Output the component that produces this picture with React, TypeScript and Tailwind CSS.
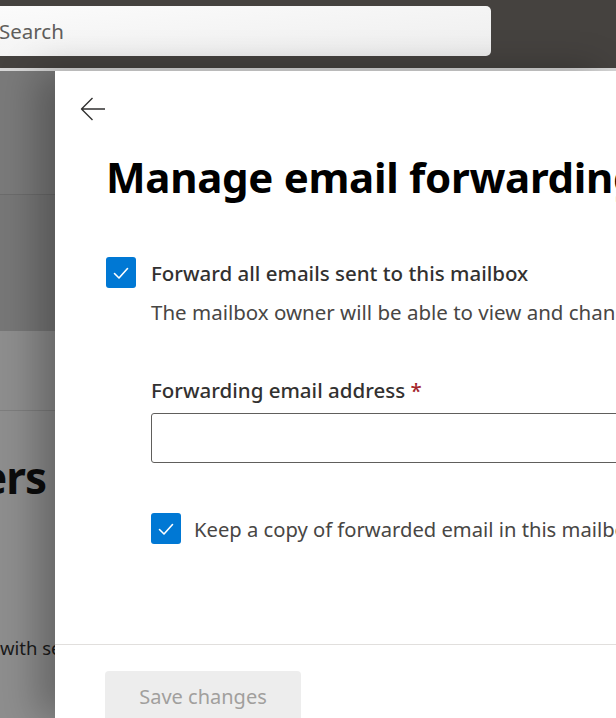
const font = { fontFamily: '"Noto Sans", "Open Sans", sans-serif' }

const CheckBox = () => (
    <div className="w-[30px] h-[31px] rounded-[3px] bg-[#0078d4] flex items-center justify-center shrink-0">
        <svg width="20" height="20" viewBox="0 0 20 20" fill="none">
            <path d="M3.5 10.5 L8 15 L16.5 5.5" stroke="#ffffff" strokeWidth="1.6" strokeLinecap="round" strokeLinejoin="round" />
        </svg>
    </div>
)

const App = () => {
    return (
        <div className="w-[616px] h-[718px] overflow-hidden flex flex-col bg-white" style={font}>
            {/* Top bar */}
            <header className="h-[68px] bg-[#45423f] flex items-start pt-[6px] shrink-0">
                <div className="w-[491px] h-[50px] rounded-r-[5px] bg-gradient-to-br from-[#fbfbfb] to-[#eeeeee] flex items-center">
                    <span className="text-[20.5px] text-[#605e5c] -ml-[1px]">Search</span>
                </div>
            </header>
            <div className="h-[3px] bg-[#d7d7d7] shrink-0"></div>

            <div className="flex flex-1 min-h-0">
                {/* Dimmed page behind the panel */}
                <aside className="w-[55px] shrink-0 flex flex-col overflow-hidden">
                    <div className="h-[124px] bg-[#7a7a7a] border-b border-[#6c6c6c]"></div>
                    <div className="h-[136px] bg-[#777777]"></div>
                    <div className="h-[80px] bg-[#8e8e8e] border-b border-[#7e7e7e]"></div>
                    <div className="flex-1 bg-[#8e8e8e] flex flex-col">
                        <div className="mt-[44px] flex justify-end pr-[9px]">
                            <span className="text-[44px] font-bold leading-none text-[#0c0c0c] whitespace-nowrap tracking-[-1px]">ers</span>
                        </div>
                        <span className="mt-[140px] text-[18.5px] leading-none text-[#1a1a1a] whitespace-nowrap">with settings</span>
                    </div>
                </aside>

                {/* Panel */}
                <main className="flex-1 min-w-0 relative z-10 bg-white shadow-[-18px_0_36px_rgba(0,0,0,0.28)] flex flex-col overflow-hidden">
                    <div className="flex-1 pl-[25px]">
                        <button className="mt-[26px] w-[26px] h-[24px] flex items-center">
                            <svg width="26" height="24" viewBox="0 0 26 24" fill="none">
                                <path d="M25 12 H1.5 M12.5 1 L1.5 12 L12.5 23" stroke="#323130" strokeWidth="1.4" strokeLinejoin="round" />
                            </svg>
                        </button>
                        <div className="pl-[26px]">
                            <h1 className="mt-[35px] text-[42px] font-bold leading-none text-black whitespace-nowrap tracking-[-0.3px]">Manage email forwarding</h1>

                            <div className="mt-[59px] flex items-center gap-[15px]">
                                <CheckBox />
                                <span className="text-[20.5px] leading-[28px] font-medium text-[#323130] whitespace-nowrap">Forward all emails sent to this mailbox</span>
                            </div>
                            <p className="mt-[10px] ml-[45px] text-[20.5px] leading-[28px] text-[#484644] whitespace-nowrap">The mailbox owner will be able to view and change these forwarding settings.</p>

                            <div className="ml-[45px] mt-[50px]">
                                <label className="block text-[20.5px] leading-[28px] font-medium text-[#323130] whitespace-nowrap">
                                    Forwarding email address <span className="text-[#a4262c]">*</span>
                                </label>
                                <div className="mt-[9px] h-[50px] w-[600px] border border-[#605e5c] rounded-[3px]"></div>

                                <div className="mt-[50px] flex items-center gap-[13px]">
                                    <CheckBox />
                                    <span className="text-[20.2px] leading-[28px] text-[#484644] whitespace-nowrap">Keep a copy of forwarded email in this mailbox</span>
                                </div>
                            </div>
                        </div>
                    </div>

                    <footer className="h-[74px] border-t border-[#e1dfdd] pl-[50px] pt-[26px] shrink-0">
                        <div className="w-[196px] h-[60px] rounded-[4px] bg-[#ededed] flex items-start justify-center pt-[11px]">
                            <span className="text-[20px] text-[#a19f9d]">Save changes</span>
                        </div>
                    </footer>
                </main>
            </div>
        </div>
    )
}

export default App
